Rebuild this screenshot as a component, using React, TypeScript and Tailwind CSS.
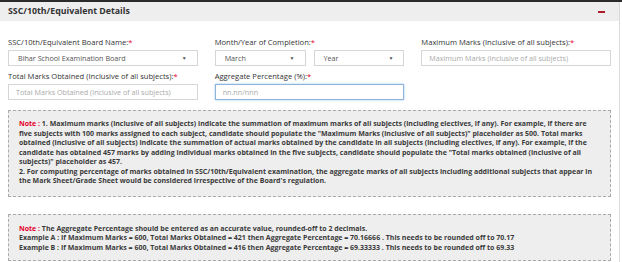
function Req() {
    return <span className="text-[#e4002b]">*</span>
}

function SelectBox({ value, className }: { value: string; className?: string }) {
    return (
        <div className={"flex h-[16px] items-center justify-between border border-[#d6d6d6] bg-white pl-[9px] pr-[10px] " + (className ?? "")}>
            <span className="text-[7.2px] text-[#555]">{value}</span>
            <span className="text-[5px] leading-none text-[#555]">▼</span>
        </div>
    )
}

function TextBox({ placeholder, focused }: { placeholder: string; focused?: boolean }) {
    return (
        <div className={"flex h-[16px] items-center px-[7px] bg-white border " + (focused ? "border-[#8fb4dc] shadow-[0_0_2px_#9ec3ea]" : "border-[#d6d6d6]")}>
            <span className="text-[7.2px] text-[#aaa]">{placeholder}</span>
        </div>
    )
}

function Field({ label, children }: { label: string; children: React.ReactNode }) {
    return (
        <div className="flex flex-col">
            <label className="mb-[3px] text-[7.6px] leading-[10px] text-[#333]">{label}<Req /></label>
            {children}
        </div>
    )
}

export default function App() {
    return (
        <div className="h-[262px] w-[622px] overflow-hidden bg-white font-['Open_Sans',sans-serif]">
            <div className="h-[2px] bg-[#2b2b2b]" />
            <div className="mr-[2px] border-r border-[#d9d9d9] h-[260px]">
                <div className="flex h-[19px] items-center justify-between bg-[#eeeeee] pl-[8px] pr-[14px]">
                    <h4 className="text-[8.8px] font-bold text-[#333]">SSC/10th/Equivalent Details</h4>
                    <span className="block h-[2px] w-[7px] bg-[#b0182a]" />
                </div>

                <div className="grid grid-cols-3 gap-x-[17px] gap-y-[5px] px-[8px] pt-[16px]">
                    <Field label="SSC/10th/Equivalent Board Name:">
                        <SelectBox value="Bihar School Examination Board" />
                    </Field>
                    <Field label="Month/Year of Completion:">
                        <div className="flex gap-[8px]">
                            <SelectBox value="March" className="flex-1" />
                            <SelectBox value="Year" className="flex-1" />
                        </div>
                    </Field>
                    <Field label="Maximum Marks (Inclusive of all subjects):">
                        <TextBox placeholder="Maximum Marks (Inclusive of all subjects)" />
                    </Field>
                    <Field label="Total Marks Obtained (Inclusive of all subjects):">
                        <TextBox placeholder="Total Marks Obtained (Inclusive of all subjects)" />
                    </Field>
                    <Field label="Aggregate Percentage (%):">
                        <TextBox placeholder="nn.nn/nnn" focused />
                    </Field>
                </div>

                <div className="mx-[8px] mt-[10px] border border-dashed border-[#aaa] bg-[#eeeeee] pl-[10px] pr-[16px] pt-[8px] pb-[10px] text-[7px] font-bold leading-[9.5px] text-[#3a3a3a]">
                    <p>
                        <span className="text-[#e4002b]">Note : </span>1. Maximum marks (inclusive of all subjects) indicate the summation of maximum marks of all subjects (including electives, if any). For example, if there are five subjects with 100 marks assigned to each subject, candidate should populate the "Maximum Marks (inclusive of all subjects)" placeholder as 500. Total marks obtained (inclusive of all subjects) indicate the summation of actual marks obtained by the candidate in all subjects (including electives, if any). For example, if the candidate has obtained 457 marks by adding individual marks obtained in the five subjects, candidate should populate the "Total marks obtained (inclusive of all subjects)" placeholder as 457.
                    </p>
                    <p>
                        2. For computing percentage of marks obtained in SSC/10th/Equivalent examination, the aggregate marks of all subjects including additional subjects that appear in the Mark Sheet/Grade Sheet would be considered irrespective of the Board's regulation.
                    </p>
                </div>

                <div className="mx-[8px] mt-[17px] border border-dashed border-[#aaa] bg-[#eeeeee] pl-[10px] pr-[16px] pt-[9px] pb-[8px] text-[7px] font-bold leading-[9.5px] text-[#3a3a3a]">
                    <p><span className="text-[#e4002b]">Note : </span>The Aggregate Percentage should be entered as an accurate value, rounded-off to 2 decimals.</p>
                    <p>Example A : If Maximum Marks = 600, Total Marks Obtained = 421 then Aggregate Percentage = 70.16666 . This needs to be rounded off to 70.17</p>
                    <p>Example B : If Maximum Marks = 600, Total Marks Obtained = 416 then Aggregate Percentage = 69.33333 . This needs to be rounded off to 69.33</p>
                </div>
            </div>
        </div>
    )
}
